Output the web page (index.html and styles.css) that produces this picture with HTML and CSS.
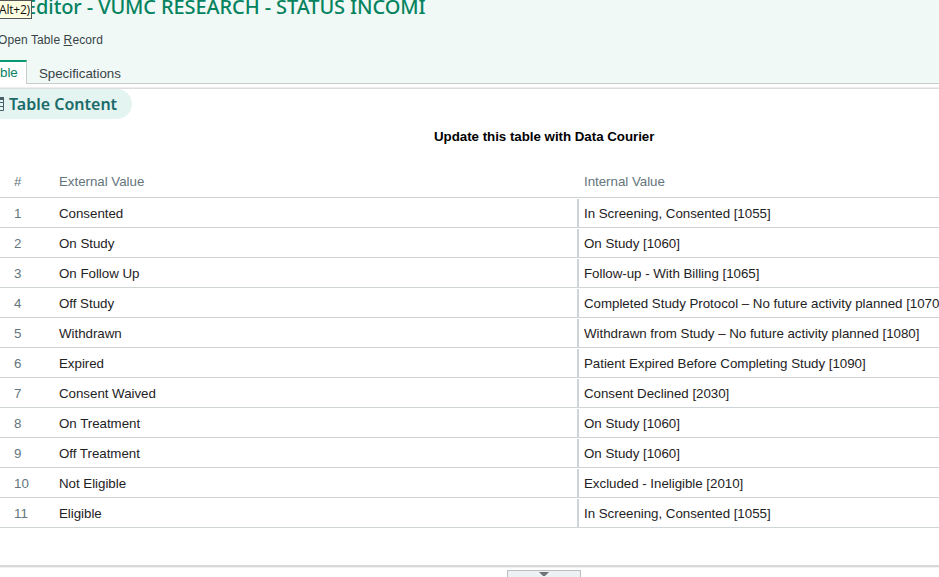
FILE: index.html
```html
<!DOCTYPE html>
<html lang="en">
<head>
<meta charset="utf-8">
<title>Table Editor</title>
<link rel="stylesheet" href="styles.css">
</head>
<body>
<header class="top">
  <h1 class="title"><span>Editor - VUMC RESEARCH - STATUS INCOMI</span></h1>
  <div class="tooltip">Alt+2)</div>
  <div class="toolbar">Open Table <u>R</u>ecord</div>
  <nav class="tabs">
    <div class="tab active">ble</div>
    <div class="tab specs">Specifications</div>
  </nav>
</header>
<main class="panel">
  <h2 class="section">
    <svg class="grid-icon" width="4" height="16" viewBox="0 0 4 16"><path d="M0 1.5H3.5V14.5H0M0 6.5H3.5M0 10.5H3.5" fill="none" stroke="#49606b"/><path d="M0 1H4V4H0Z" fill="#49606b"/></svg>
    <span>Table Content</span>
  </h2>
  <p class="notice"><span>Update this table with Data Courier</span></p>
  <div class="table">
    <div class="row head"><div class="num">#</div><div class="ext">External Value</div><div class="int">Internal Value</div></div>
    <div class="row"><div class="num">1</div><div class="ext">Consented</div><div class="int">In Screening, Consented [1055]</div></div>
    <div class="row"><div class="num">2</div><div class="ext">On Study</div><div class="int">On Study [1060]</div></div>
    <div class="row"><div class="num">3</div><div class="ext">On Follow Up</div><div class="int">Follow-up - With Billing [1065]</div></div>
    <div class="row"><div class="num">4</div><div class="ext">Off Study</div><div class="int">Completed Study Protocol – No future activity planned [1070</div></div>
    <div class="row"><div class="num">5</div><div class="ext">Withdrawn</div><div class="int">Withdrawn from Study – No future activity planned [1080]</div></div>
    <div class="row"><div class="num">6</div><div class="ext">Expired</div><div class="int">Patient Expired Before Completing Study [1090]</div></div>
    <div class="row"><div class="num">7</div><div class="ext">Consent Waived</div><div class="int">Consent Declined [2030]</div></div>
    <div class="row"><div class="num">8</div><div class="ext">On Treatment</div><div class="int">On Study [1060]</div></div>
    <div class="row"><div class="num">9</div><div class="ext">Off Treatment</div><div class="int">On Study [1060]</div></div>
    <div class="row"><div class="num">10</div><div class="ext">Not Eligible</div><div class="int">Excluded - Ineligible [2010]</div></div>
    <div class="row"><div class="num">11</div><div class="ext">Eligible</div><div class="int">In Screening, Consented [1055]</div></div>
  </div>
</main>
<footer class="bottom">
  <div class="expander"><svg width="10" height="4" viewBox="0 0 10 4"><path d="M0 0H10L6 4H4Z" fill="#6e7476"/></svg></div>
</footer>
</body>
</html>
```
FILE: styles.css
```css
* { box-sizing: border-box; }
body {
  margin: 0;
  width: 939px;
  height: 577px;
  overflow: hidden;
  background: #fff;
  font: 13.333px/16px "Liberation Sans", Arial, sans-serif;
  letter-spacing: -0.03px;
  color: #1e2224;
}
.top {
  position: relative;
  height: 84px;
  background: #f0f9f6;
  border-bottom: 1px solid #c8cccb;
}
.title {
  margin: 0;
  height: 32px;
  padding-left: 25px;
  font: 500 20px/28px "Noto Sans", "Open Sans", sans-serif;
  letter-spacing: -0.1px;
  color: #05835f;
  white-space: nowrap;
}
.title span { display: block; margin-top: -7px; float: left; }
.tooltip {
  position: absolute;
  left: 0;
  top: 0;
  width: 32px;
  height: 19px;
  border: 1px solid #555;
  border-left: 0;
  background: #ffffe1;
  color: #111;
  font: 12px/17px "Open Sans", sans-serif;
  letter-spacing: -0.2px;
  text-indent: -1px;
  white-space: nowrap;
}
.toolbar {
  height: 28px;
  margin-left: -2px;
  font-size: 12px;
  letter-spacing: 0.1px;
  color: #384347;
}
.tabs { display: flex; height: 24px; color: #384347; }
.tab { line-height: 27px; }
.active {
  width: 27px;
  height: 24px;
  border-top: 2px solid #089a72;
  border-right: 1px solid #c8cccb;
  background: #fff;
  color: #05835f;
  line-height: 22px;
}
.specs { padding-left: 12px; }
.panel { height: 481px; overflow: hidden; }
.panel::before {
  content: "";
  display: block;
  height: 5px;
  background: linear-gradient(#fff 0 3px, #eee 3px 4px, #dcdcdc 4px 5px);
}
.section {
  display: flex;
  align-items: center;
  gap: 5px;
  width: 132px;
  height: 30px;
  margin: 0;
  border-radius: 0 15px 15px 0;
  background: #e4f4f0;
  color: #1b6b6b;
  font: 600 16px/30px "Noto Sans", "Open Sans", sans-serif;
  letter-spacing: 0;
  white-space: nowrap;
}
.notice {
  margin: 10px 0 20px 434px;
  font-weight: bold;
  color: #000;
}
.row {
  display: grid;
  grid-template-columns: 59px 518px 1fr;
  height: 30px;
  border-bottom: 1px solid #cfd5d7;
  line-height: 31px;
  white-space: nowrap;
}
.head { height: 33px; line-height: 34px; color: #64757d; }
.num { padding-left: 14px; color: #64757d; }
.int {
  height: 28px;
  margin-top: 1px;
  padding-left: 5px;
  border-left: 2px solid #cdd3d7;
  line-height: 29px;
}
.head .int { border-color: transparent; line-height: 32px; }
.bottom { height: 12px; border-top: 2px solid #d8d8d8; padding-top: 3px; box-shadow: inset 0 1px #f3f3f3; }
.expander {
  width: 74px;
  height: 10px;
  margin-left: 507px;
  border: 1px solid #b9bec1;
  background: #edf1f4;
  padding: 1px 0 0 31px;
}
.expander svg { display: block; }
```
